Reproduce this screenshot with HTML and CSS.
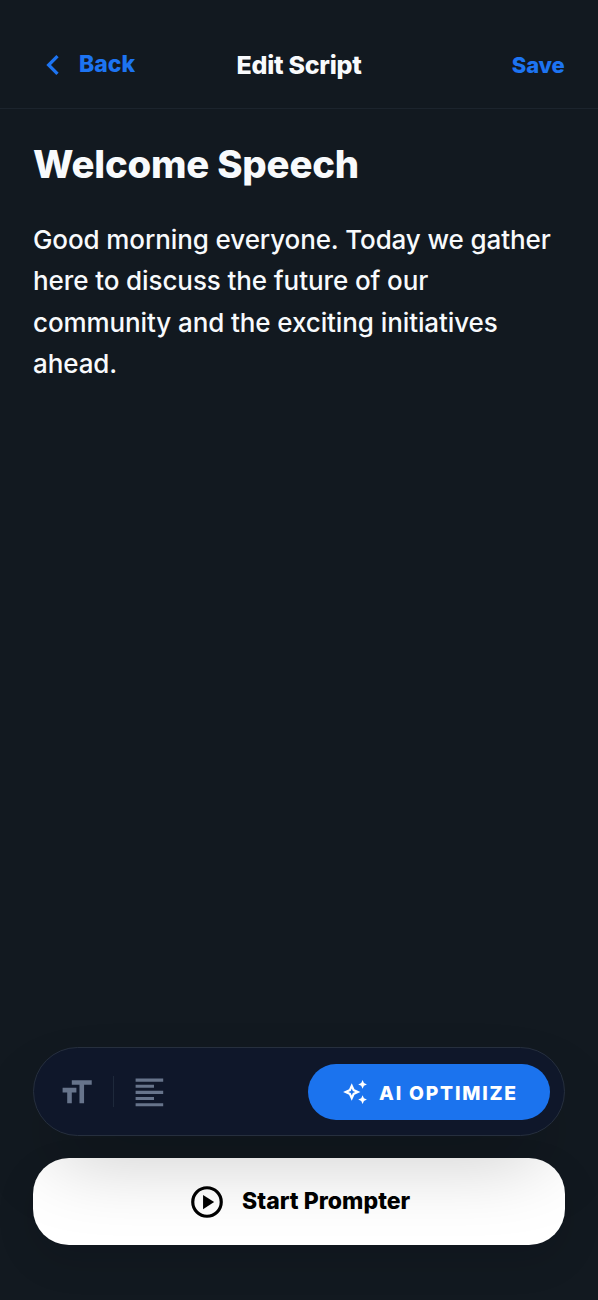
FILE: index.html
```html
<!DOCTYPE html>
<html lang="en">
<head>
<meta charset="utf-8">
<title>Edit Script</title>
<link rel="stylesheet" href="styles.css">
</head>
<body>
<div class="screen">
  <header class="topbar">
    <div class="back">
      <svg class="icon-back" viewBox="0 0 24 24"><path d="M14 18 8 12l6-6 1.4 1.4-4.6 4.6 4.6 4.6z"/></svg>
      <span class="back-label">Back</span>
    </div>
    <div class="title"><span>Edit Script</span></div>
    <div class="save"><span>Save</span></div>
  </header>
  <main class="editor">
    <h1 class="heading"><span>Welcome Speech</span></h1>
    <p class="body-text">Good morning everyone. Today we gather<br>here to discuss the future of our<br>community and the exciting initiatives<br>ahead.</p>
  </main>
  <footer class="footer">
    <div class="toolbar">
      <div class="tools">
        <svg class="tool" viewBox="0 0 24 24"><path d="M9 4v3h5v12h3V7h5V4H9zm-6 8h3v7h3v-7h3V9H3v3z"/></svg>
        <div class="divider"></div>
        <svg class="tool" viewBox="0 0 24 24"><path d="M15 15H3v2h12v-2zm0-8H3v2h12V7zM3 13h18v-2H3v2zm0 8h18v-2H3v2zM3 3v2h18V3H3z"/></svg>
      </div>
      <div class="optimize">
        <svg class="icon-spark" viewBox="0 0 24 24"><path d="M19 9l1.25-2.75L23 5l-2.75-1.25L19 1l-1.25 2.75L15 5l2.75 1.25zM19 15l-1.25 2.75L15 19l2.75 1.25L19 23l1.25-2.75L23 19l-2.75-1.25zM11.5 9.5L9 4 6.5 9.5 1 12l5.5 2.5L9 20l2.5-5.5L17 12l-5.5-2.5zm-1.51 3.49L9 15.17l-.99-2.18L5.83 12l2.18-.99L9 8.83l.99 2.18 2.18.99-2.18.99z"/></svg>
        <span class="optimize-label">AI OPTIMIZE</span>
      </div>
    </div>
    <div class="start">
      <svg class="icon-play" viewBox="0 0 24 24"><circle cx="12" cy="12" r="9" fill="none" stroke="#000" stroke-width="2"/><path d="m9.5 16.5 7-4.5-7-4.5z"/></svg>
      <span class="start-label">Start Prompter</span>
    </div>
  </footer>
</div>
</body>
</html>
```
FILE: styles.css
```css
* { box-sizing: border-box; }
body {
  margin: 0;
  background: #121920;
  color: #f8fafc;
  font-family: Inter, "Liberation Sans", sans-serif;
}
svg { display: block; flex: none; fill: currentColor; }
.screen {
  display: flex;
  flex-direction: column;
  width: 598px;
  height: 1300px;
  overflow: hidden;
}
.topbar {
  display: grid;
  grid-template-columns: 1fr auto 1fr;
  align-items: center;
  height: 109px;
  padding: 22px 33px 0;
  border-bottom: 1px solid #1c242d;
  white-space: nowrap;
}
.back { display: flex; align-items: center; color: #1d74f2; }
.icon-back { width: 40px; height: 40px; }
.back-label {
  margin: -3px 0 0 6px;
  font-size: 23px;
  font-weight: 800;
  line-height: 30px;
}
.title {
  padding-bottom: 1px;
  font-size: 25px;
  font-weight: 800;
  line-height: 30px;
  letter-spacing: -0.25px;
}
.save {
  justify-self: end;
  padding-right: 0.5px;
  font-size: 22px;
  font-weight: 800;
  line-height: 30px;
  letter-spacing: -0.2px;
  color: #1d74f2;
}
.editor { flex: 1; padding: 32px 33px 0; }
.heading {
  margin: 0;
  font-size: 38.3px;
  font-weight: 800;
  line-height: 46px;
  letter-spacing: -0.2px;
  white-space: nowrap;
}
.body-text {
  margin: 32px 0 0;
  font-size: 26px;
  font-weight: 500;
  line-height: 41.4px;
  letter-spacing: -0.1px;
  white-space: nowrap;
}
.footer {
  display: flex;
  flex-direction: column;
  gap: 22px;
  padding: 0 33px 55px;
}
.toolbar {
  position: relative;
  z-index: 1;
  display: flex;
  align-items: center;
  justify-content: space-between;
  height: 89px;
  padding: 1px 14px 0 24px;
  border: 1px solid #262f3e;
  border-radius: 45px;
  background: #0f172a;
  box-shadow: 0 38px 77px -18px rgba(0, 0, 0, 0.25);
}
.tools { display: flex; align-items: center; color: #67748b; }
.tool { width: 36.8px; height: 36.8px; }
.divider { width: 1px; height: 31px; margin: 0 17.2px 0 17.8px; background: #1e293b; }
.optimize {
  display: flex;
  align-items: center;
  gap: 11px;
  width: 242px;
  height: 56px;
  padding-left: 34px;
  border-radius: 28px;
  background: #1b73ee;
  color: #fff;
  font-size: 19.3px;
  font-weight: 800;
  letter-spacing: 1.8px;
  line-height: 28px;
  white-space: nowrap;
}
.optimize-label { padding-top: 1px; }
.icon-spark { width: 26px; height: 26px; }
.start {
  display: flex;
  align-items: center;
  gap: 16.5px;
  height: 87px;
  padding-left: 154.5px;
  border-radius: 36px;
  background: #fff;
  color: #000;
  font-size: 23px;
  font-weight: 800;
  line-height: 30px;
  letter-spacing: 0.03px;
  white-space: nowrap;
  box-shadow: 0 15px 38px rgba(0, 0, 16, 0.13);
}
.start-label { margin-top: -2px; }
.icon-play { width: 38px; height: 38px; }
```
